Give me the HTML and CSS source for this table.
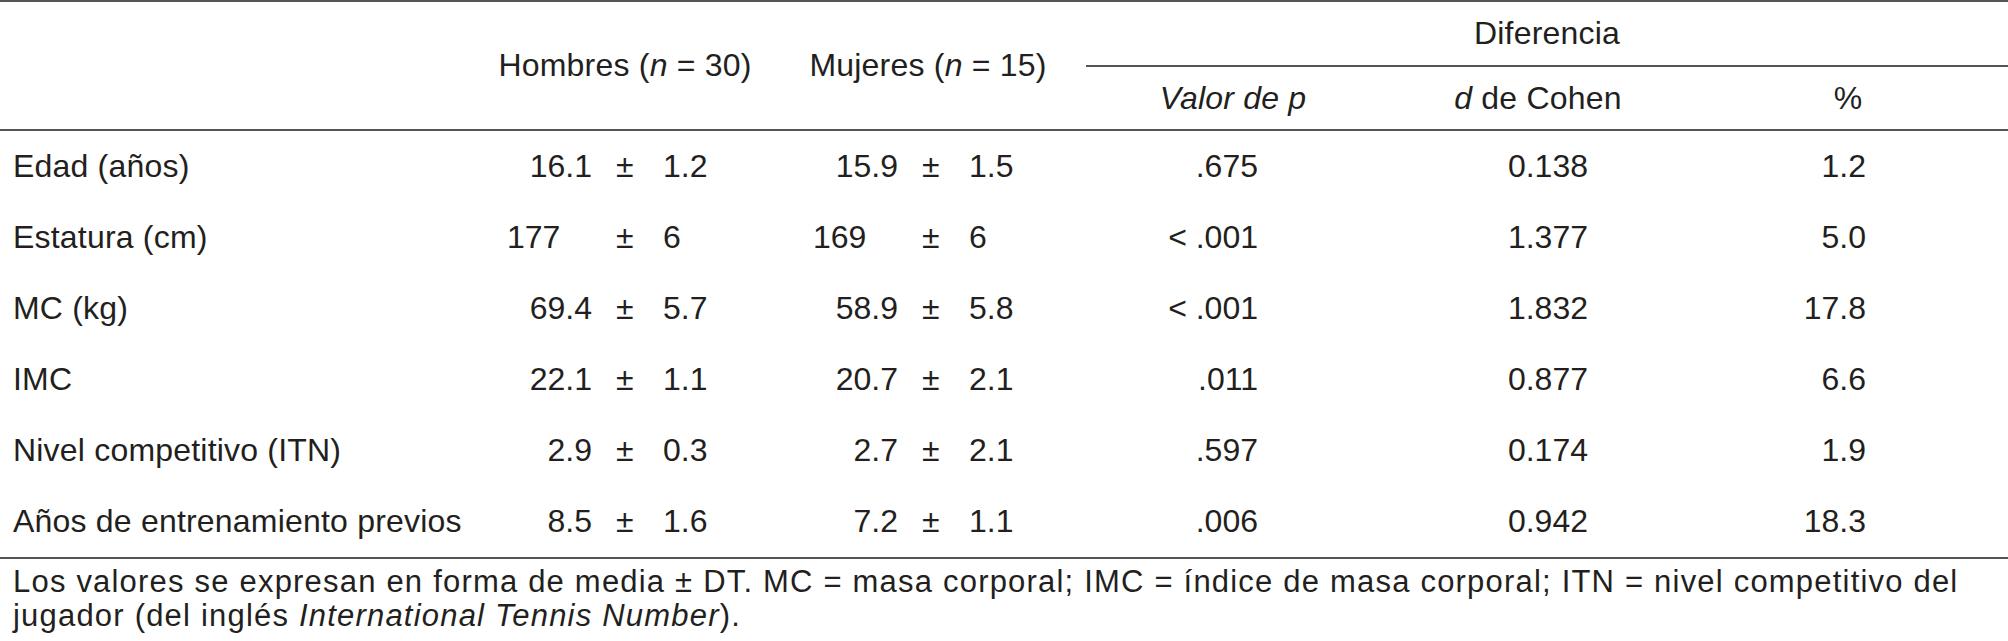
FILE: index.html
```html
<!DOCTYPE html>
<html lang="es">
<head>
  <meta charset="UTF-8">
  <meta name="viewport" content="width=device-width, initial-scale=1.0">
  <title>Características de los participantes</title>
  <link rel="stylesheet" href="styles.css">
</head>

<body>
  <table class="stats">
    <colgroup>
      <col class="c-label">
      <col class="c-men">
      <col class="c-women">
      <col class="c-p">
      <col class="c-d">
      <col class="c-pct">
    </colgroup>
    <thead>
      <tr class="head-top">
        <th rowspan="2"></th>
        <th rowspan="2">Hombres (<i>n</i> = 30)</th>
        <th rowspan="2">Mujeres (<i>n</i> = 15)</th>
        <th colspan="3" class="group">Diferencia</th>
      </tr>
      <tr class="head-sub">
        <th><i>Valor de p</i></th>
        <th><i>d</i> de Cohen</th>
        <th class="pct-head">%</th>
      </tr>
    </thead>
    <tbody>
      <tr>
        <td class="label">Edad (años)</td>
        <td class="ms men"><span class="m">16.1</span><span class="pm">±</span><span class="sd">1.2</span></td>
        <td class="ms women"><span class="m">15.9</span><span class="pm">±</span><span class="sd">1.5</span></td>
        <td class="p">.675</td>
        <td class="d">0.138</td>
        <td class="pct">1.2</td>
      </tr>
      <tr>
        <td class="label">Estatura (cm)</td>
        <td class="ms men"><span class="m int">177</span><span class="pm">±</span><span class="sd">6</span></td>
        <td class="ms women"><span class="m int">169</span><span class="pm">±</span><span class="sd">6</span></td>
        <td class="p">&lt; .001</td>
        <td class="d">1.377</td>
        <td class="pct">5.0</td>
      </tr>
      <tr>
        <td class="label">MC (kg)</td>
        <td class="ms men"><span class="m">69.4</span><span class="pm">±</span><span class="sd">5.7</span></td>
        <td class="ms women"><span class="m">58.9</span><span class="pm">±</span><span class="sd">5.8</span></td>
        <td class="p">&lt; .001</td>
        <td class="d">1.832</td>
        <td class="pct">17.8</td>
      </tr>
      <tr>
        <td class="label">IMC</td>
        <td class="ms men"><span class="m">22.1</span><span class="pm">±</span><span class="sd">1.1</span></td>
        <td class="ms women"><span class="m">20.7</span><span class="pm">±</span><span class="sd">2.1</span></td>
        <td class="p">.011</td>
        <td class="d">0.877</td>
        <td class="pct">6.6</td>
      </tr>
      <tr>
        <td class="label">Nivel competitivo (ITN)</td>
        <td class="ms men"><span class="m">2.9</span><span class="pm">±</span><span class="sd">0.3</span></td>
        <td class="ms women"><span class="m">2.7</span><span class="pm">±</span><span class="sd">2.1</span></td>
        <td class="p">.597</td>
        <td class="d">0.174</td>
        <td class="pct">1.9</td>
      </tr>
      <tr>
        <td class="label">Años de entrenamiento previos</td>
        <td class="ms men"><span class="m">8.5</span><span class="pm">±</span><span class="sd">1.6</span></td>
        <td class="ms women"><span class="m">7.2</span><span class="pm">±</span><span class="sd">1.1</span></td>
        <td class="p">.006</td>
        <td class="d">0.942</td>
        <td class="pct">18.3</td>
      </tr>
    </tbody>
  </table>

  <p class="note">Los valores se expresan en forma de media ± DT. MC = masa corporal; IMC = índice de masa corporal; ITN = nivel competitivo del<br>jugador (del inglés <i>International Tennis Number</i>).</p>
</body>
</html>
```

FILE: styles.css
```css
body {
  margin: 0;
  padding: 0;
  background: #ffffff;
  color: #231f20;
  font-family: "Liberation Sans", Arial, sans-serif;
}
.stats {
  width: 2008px;
  table-layout: fixed;
  border-collapse: collapse;
  font-size: 32px;
  border-top: 2px solid #555555;
  border-bottom: 2px solid #555555;
}
.c-label { width: 480px; }
.c-men { width: 290px; }
.c-women { width: 316px; }
.c-p { width: 294px; }
.c-d { width: 316px; }
.c-pct { width: 312px; }
thead {
  border-bottom: 2px solid #555555;
}
th {
  font-weight: normal;
  text-align: center;
  vertical-align: middle;
  padding: 0;
  letter-spacing: 0.2px;
}
.head-top th {
  height: 63px;
}
.head-sub th {
  height: 62px;
}
.group {
  border-bottom: 2px solid #555555;
}
.pct-head {
  padding-right: 8px;
}
td {
  height: 71px;
  padding: 0;
  vertical-align: middle;
  white-space: nowrap;
}
.label {
  padding-left: 13px;
  letter-spacing: 0.2px;
}
.ms .m,
.ms .pm,
.ms .sd {
  display: inline-block;
}
.ms .m {
  width: 85px;
  text-align: right;
}
.ms .m.int {
  text-align: left;
}
.ms .pm {
  box-sizing: border-box;
  width: 71px;
  padding-left: 24px;
  text-align: left;
}
.men {
  padding-left: 27px;
}
.women {
  padding-left: 43px;
}
.p, .d, .pct {
  text-align: right;
}
.p { padding-right: 122px; }
.d { padding-right: 108px; }
.pct { padding-right: 142px; }
.note {
  margin: 0;
  padding: 6px 0 0 13px;
  font-size: 31px;
  line-height: 34px;
  letter-spacing: 1.2px;
}
```
